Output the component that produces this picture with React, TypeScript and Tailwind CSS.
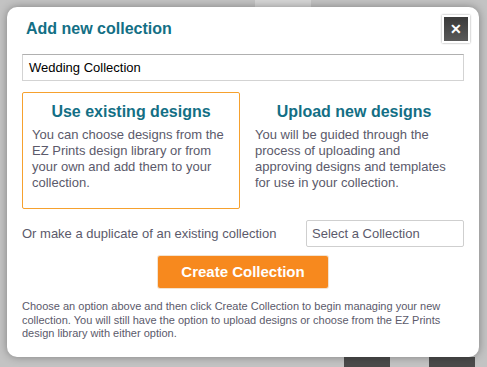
import React from "react";

export default function App() {
  const font = { fontFamily: '"Liberation Sans", Arial, sans-serif' };
  return (
    <div className="relative w-[487px] h-[367px] overflow-hidden bg-[#c3c3c3] flex flex-col" style={font}>
      {/* background page hints, laid out by flow */}
      <div className="h-[8px] flex pl-[255px]">
        <div className="w-[56px] bg-[#d6d6d6]" />
      </div>
      <div className="flex-1" />
      <div className="h-[10px] flex gap-[39px] pl-[344px]">
        <div className="w-[46px] bg-[#4b4b4b]" />
        <div className="w-[46px] bg-[#4b4b4b]" />
      </div>

      {/* modal dialog over the page */}
      <div className="absolute left-[7px] top-[7px] w-[472px] h-[350px] bg-white rounded-[10px] shadow-[0_0_8px_rgba(0,0,0,0.35)] px-[15px] pt-[12px]">
        <button className="absolute right-[9px] top-[8px] w-[28px] h-[28px] border-2 border-white bg-gradient-to-b from-[#3a3a3a] to-[#5a5a5a] shadow-[0_0_2px_rgba(0,0,0,0.4)] flex items-center justify-center">
          <span className="text-white font-bold text-[14px] leading-none">✕</span>
        </button>

        <h1 className="pl-[4px] text-[16px] leading-[20px] font-bold text-[#136f85]">Add new collection</h1>

        <div className="mt-[15px] h-[27px] border border-[#d3d3d3] border-t-[#b0b0b0] flex items-center px-[6px] text-[13px] text-black">
          Wedding Collection
        </div>

        <div className="mt-[11px] grid grid-cols-[218px_218px] gap-[5px]">
          <div className="h-[117px] border border-[#f6a12e] rounded-[2px] pt-[9px] px-[9px]">
            <div className="text-center text-[16px] leading-[20px] font-bold text-[#136f85]">Use existing designs</div>
            <p className="mt-[5px] text-[13px] leading-[16px] text-[#5b5a6b]">
              You can choose designs from the EZ Prints design library or from your own and add them to your collection.
            </p>
          </div>
          <div className="h-[117px] border border-transparent pt-[9px] px-[9px]">
            <div className="text-center text-[16px] leading-[20px] font-bold text-[#136f85]">Upload new designs</div>
            <p className="mt-[5px] text-[13px] leading-[16px] text-[#5b5a6b]">
              You will be guided through the process of uploading and approving designs and templates for use in your collection.
            </p>
          </div>
        </div>

        <div className="mt-[11px] flex items-center justify-between">
          <span className="text-[13px] text-[#5b5a6b]">Or make a duplicate of an existing collection</span>
          <div className="w-[158px] h-[27px] border border-[#cfcfcf] rounded-[2px] flex items-center px-[5px] text-[13px] text-[#5b5a6b]">
            Select a Collection
          </div>
        </div>

        <div className="mt-[9px] flex justify-center">
          <button className="w-[170px] h-[32px] bg-[#f7891e] rounded-[2px] text-white font-bold text-[15px] shadow-[0_0_0_1px_#f3e3d0]">
            Create Collection
          </button>
        </div>

        <p className="mt-[12px] text-[11px] leading-[13.5px] text-[#5b5a6b]">
          Choose an option above and then click Create Collection to begin managing your new collection. You will still have the option to upload designs or choose from the EZ Prints design library with either option.
        </p>
      </div>
    </div>
  );
}
